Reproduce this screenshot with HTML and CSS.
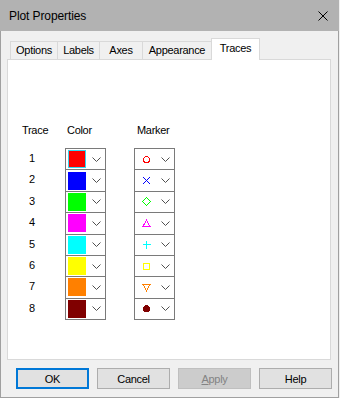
FILE: index.html
```html
<!DOCTYPE html>
<html lang="en">
<head>
    <meta charset="UTF-8">
    <title>Plot Properties</title>
    <link rel="stylesheet" href="styles.css">
</head>
<body>
    <div class="window">
        <!-- Barra de titulo -->
        <div class="titlebar">
            <span class="title">Plot Properties</span>
            <svg class="close" width="10" height="10" viewBox="0 0 10 10">
                <path d="M0.5 0.5 L9.5 9.5 M9.5 0.5 L0.5 9.5" stroke="#000" stroke-width="1" fill="none"/>
            </svg>
        </div>

        <div class="client">
            <div class="tabs">
                <div class="tab tab-options">Options</div>
                <div class="tab tab-labels">Labels</div>
                <div class="tab tab-axes">Axes</div>
                <div class="tab tab-appearance">Appearance</div>
                <div class="tab tab-traces active">Traces</div>
            </div>

            <div class="panel">
                <div class="trace-head">
                    <span>Trace</span>
                    <span class="head-color">Color</span>
                    <span class="head-marker">Marker</span>
                </div>

                <div class="trace-list" id="traceList"></div>
            </div>

            <div class="buttons">
                <button class="btn default">OK</button>
                <button class="btn">Cancel</button>
                <button class="btn" disabled><u>A</u>pply</button>
                <button class="btn">Help</button>
            </div>
        </div>
    </div>

    <script>
        // Colores y marcadores de cada traza
        const traces = [
            { color: '#ff0000', marker: '<circle cx="4.5" cy="4.5" r="3" fill="none" stroke="#ff0000"/>' },
            { color: '#0000ff', marker: '<path d="M1 1 L8 8 M8 1 L1 8" stroke="#0000ff" fill="none"/>' },
            { color: '#00ff00', marker: '<path d="M4.5 0.5 L8.5 4.5 L4.5 8.5 L0.5 4.5 Z" stroke="#00ff00" fill="none"/>' },
            { color: '#ff00ff', marker: '<path d="M4.5 1 L8 7.5 L1 7.5 Z" stroke="#ff00ff" fill="none"/>' },
            { color: '#00ffff', marker: '<path d="M4.5 0.5 V8.5 M0.5 4.5 H8.5" stroke="#00ffff" fill="none"/>' },
            { color: '#ffff00', marker: '<rect x="1.5" y="1.5" width="6" height="6" stroke="#ffff00" fill="none"/>' },
            { color: '#ff8000', marker: '<path d="M1 1.5 L8 1.5 L4.5 8 Z" stroke="#ff8000" fill="none"/>' },
            { color: '#800000', marker: '<circle cx="4.5" cy="4.5" r="3.5" fill="#800000"/>' }
        ];

        const chevron = '<svg class="chevron" width="9" height="5" viewBox="0 0 9 5">' +
            '<polyline points="0.5,0.5 4.5,4.5 8.5,0.5" fill="none" stroke="#505050"/></svg>';

        function buildTraces() {
            const list = document.getElementById('traceList');
            traces.forEach(function (t, i) {
                const row = document.createElement('div');
                row.className = 'trace-row';
                row.innerHTML =
                    '<span class="trace-num">' + (i + 1) + '</span>' +
                    '<div class="combo combo-color">' +
                        '<span class="swatch' + (i === 0 ? ' focused' : '') + '" style="background:' + t.color + '"></span>' +
                        chevron +
                    '</div>' +
                    '<span></span>' +
                    '<div class="combo combo-marker">' +
                        '<svg class="marker" width="9" height="9" viewBox="0 0 9 9" shape-rendering="crispEdges">' + t.marker + '</svg>' +
                        chevron +
                    '</div>';
                list.appendChild(row);
            });
        }

        buildTraces();
    </script>
</body>
</html>
```

FILE: styles.css
```css
body {
    margin: 0;
    background: #f0f0f0;
    font-family: "Liberation Sans", Arial, sans-serif;
    font-size: 11px;
    letter-spacing: -0.3px;
    color: #000;
}

.window {
    width: 339px;
    height: 398px;
    box-sizing: border-box;
    border: 1px solid #a0a0a0;
    border-top: 0;
    display: flex;
    flex-direction: column;
}

/* Barra de titulo */
.titlebar {
    height: 31px;
    margin: 0 -1px;
    padding: 0 11px 0 9px;
    background: #b2b2b2;
    display: flex;
    align-items: center;
}

.title {
    font-size: 12px;
    letter-spacing: -0.1px;
}

.close {
    margin-left: auto;
    display: block;
}

.client {
    flex: 1;
    padding: 7px 0 0 6px;
}

/* Pestanas */
.tabs {
    display: flex;
    align-items: flex-end;
    height: 21px;
    margin-left: 3px;
    position: relative;
    z-index: 1;
}

.tab {
    height: 18px;
    box-sizing: border-box;
    border: 1px solid #d9d9d9;
    border-bottom: 0;
    margin-left: -1px;
    line-height: 17px;
    text-align: center;
    background: #f0f0f0;
}

.tab-options { width: 48px; margin-left: 0; }
.tab-labels { width: 43px; }
.tab-axes { width: 44px; }
.tab-appearance { width: 70px; }
.tab-traces { width: 49px; }

.tab.active {
    height: 22px;
    margin-bottom: -1px;
    line-height: 19px;
    background: #fff;
}

.panel {
    width: 324px;
    height: 301px;
    box-sizing: border-box;
    border: 1px solid #d9d9d9;
    background: #fff;
    padding: 63px 0 0 14px;
}

/* Tabla de trazas */
.trace-head {
    display: grid;
    grid-template-columns: 43px 69px 41px;
    line-height: 14px;
}

.head-color { padding-left: 2px; }
.head-marker { padding-left: 3px; }

.trace-list {
    margin-top: 11px;
}

.trace-row {
    display: grid;
    grid-template-columns: 43px 41px 28px 41px;
    height: 21.375px;
}

.trace-num {
    padding-left: 7px;
    line-height: 21px;
}

.combo {
    height: 22.375px;
    box-sizing: border-box;
    border: 1px solid #7a7a7a;
    background: #fff;
    display: flex;
    align-items: center;
}

.combo-color {
    padding-left: 2px;
}

.combo-marker {
    padding-left: 7px;
}

.swatch {
    width: 18px;
    height: 18px;
    box-sizing: border-box;
}

.swatch.focused {
    border: 1px solid #33d6f0;
}

.marker {
    display: block;
}

.chevron {
    display: block;
    margin-left: auto;
    margin-right: 4px;
}

/* Botones */
.buttons {
    display: flex;
    gap: 8px;
    margin-top: 8px;
    padding-left: 9px;
}

.btn {
    width: 73px;
    height: 21px;
    box-sizing: border-box;
    border: 1px solid #adadad;
    background: #e1e1e1;
    font-family: inherit;
    font-size: 11px;
    letter-spacing: -0.3px;
    color: #000;
    padding: 0;
    border-radius: 0;
}

.btn.default {
    border: 2px solid #0078d7;
}

.btn[disabled] {
    background: #cccccc;
    border-color: #bfbfbf;
    color: #838383;
}
```
